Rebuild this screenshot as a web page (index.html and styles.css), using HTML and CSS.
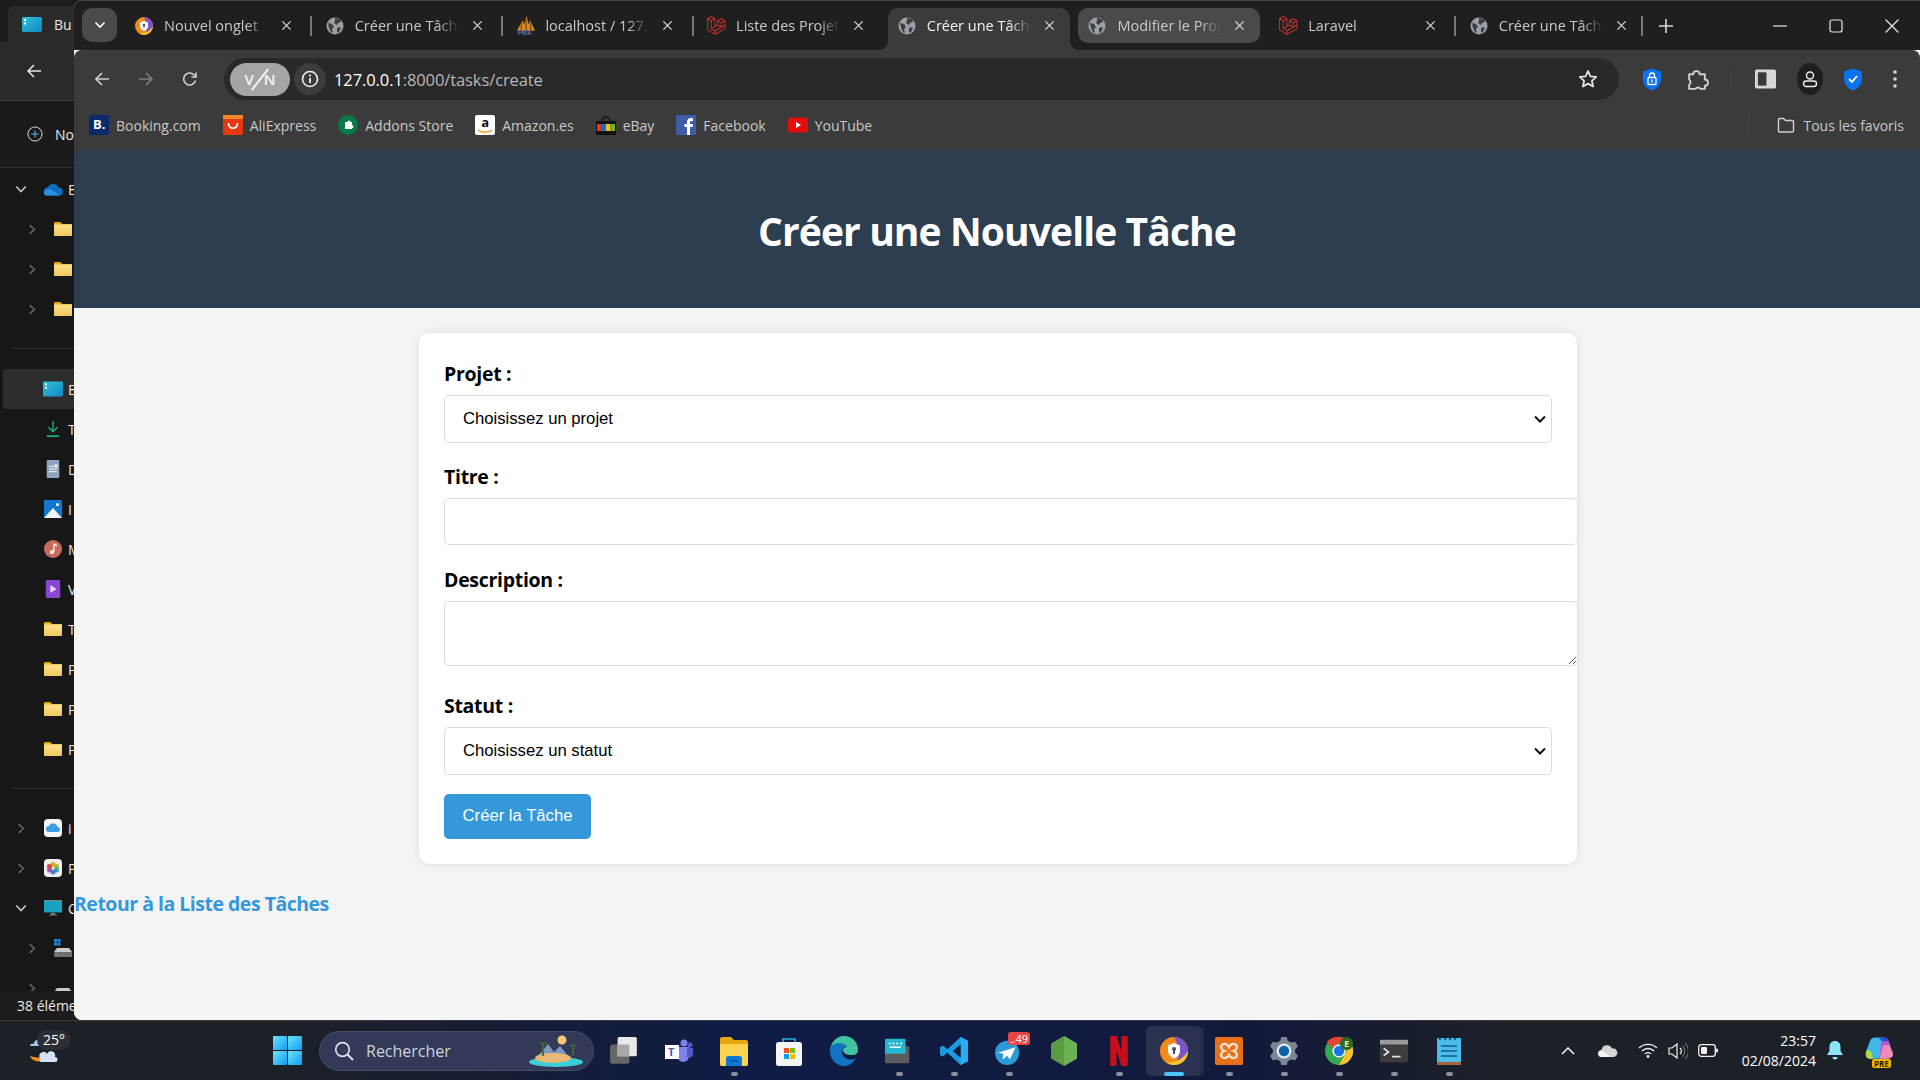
FILE: index.html
```html
<!DOCTYPE html>
<html lang="fr">
<head>
    <meta charset="UTF-8">
    <meta name="viewport" content="width=device-width, initial-scale=1.0">
    <title>Créer une Tâche</title>
    <link rel="stylesheet" href="styles.css">
</head>
<body>
    <svg class="defs" aria-hidden="true">
        <defs>
            <linearGradient id="folderFill" x1="0" y1="0" x2="0" y2="1"><stop offset="0" stop-color="#fbe08e"/><stop offset="1" stop-color="#f0c95e"/></linearGradient>
            <linearGradient id="winFill" x1="0" y1="0" x2="1" y2="1"><stop offset="0" stop-color="#6fe3fb"/><stop offset="1" stop-color="#0f9bf5"/></linearGradient>
            <linearGradient id="thisFill" x1="0" y1="0" x2="1" y2="1"><stop offset="0" stop-color="#2ec5de"/><stop offset="1" stop-color="#1484c0"/></linearGradient>
            <symbol id="globe" viewBox="0 0 18 18">
                <circle cx="9" cy="9" r="8.5" fill="#9aa0a6"/>
                <path d="M2 6l4 1 2 3-2 2 1 4-2-1-2-4zM9 1l5 1 1 3-3 1-1 2-3-2 1-2zM12 10l3 1-2 4-2 1 0-4z" fill="#3c3f43"/>
            </symbol>
            <symbol id="laravel" viewBox="0 0 20 20">
                <path d="M1.500 3.500V14l7 4.500L18 13V5.500l-3.500-2-3.500 2v4L8.500 11V3.500L5 1.500zM1.500 3.500L5 5.500l3.500-2M5 5.500V13l3.500 2L18 9.500M11 5.500l3.500 2 3.500-2M14.500 7.500v3.800M8.500 15v3.500M5 13l3.500-2M11 9.500l3.500 1.800" fill="none" stroke="#c0302a" stroke-width="1" stroke-linejoin="round"/>
            </symbol>
            <symbol id="close" viewBox="0 0 12 12"><path d="M1.500 1.500l9 9M10.500 1.500l-9 9" fill="none" stroke="currentColor" stroke-width="1.400"/></symbol>
            <symbol id="folder" viewBox="0 0 18 14">
                <path d="M0 1.500C0 .7.600 0 1.400 0h4.800l2 2H18v2H0z" fill="#e9a80f"/>
                <rect y="2.500" width="18" height="11.500" rx="1" fill="url(#folderFill)"/>
            </symbol>
            <symbol id="chev-r" viewBox="0 0 10 14"><path d="M2 1.500L8 7l-6 5.500" fill="none" stroke="#6a6a6a" stroke-width="1.800"/></symbol>
            <symbol id="chev-d" viewBox="0 0 14 10"><path d="M1.500 2L7 8l5.500-6" fill="none" stroke="#c8c8c8" stroke-width="1.800"/></symbol>
        </defs>
    </svg>

    <div class="desktop">
        <aside class="explorer">
            <div class="ex-tabs">
                <div class="ex-tab">
                    <svg class="ex-tab-icon" viewBox="0 0 20 15"><rect width="20" height="15" rx="1.500" fill="url(#thisFill)"/><rect x="2" y="2" width="2" height="2" fill="#fff"/><rect x="2" y="5.500" width="2" height="2" fill="#fff"/></svg>
                    <span>Bu</span>
                </div>
            </div>
            <div class="ex-nav">
                <svg width="18" height="18" viewBox="0 0 18 18"><path d="M16 9H3M9 3L3 9l6 6" fill="none" stroke="#e6e6e6" stroke-width="1.500"/></svg>
            </div>
            <div class="ex-cmd">
                <svg width="20" height="20" viewBox="0 0 20 20"><circle cx="10" cy="10" r="8.800" fill="none" stroke="#e6e6e6" stroke-width="1.200"/><path d="M10 5.500v9M5.500 10h9" stroke="#57b8ff" stroke-width="1.300"/></svg>
                <span>No</span>
            </div>
            <nav class="ex-side">
                <div class="ex-row"><svg class="chev-d"><use href="#chev-d"/></svg><svg class="ex-ico" viewBox="0 0 20 13"><path d="M5 13a4 4 0 0 1-.500-8A6 6 0 0 1 15.500 5 4 4 0 0 1 16 13z" fill="#0f6cc4"/><path d="M3 13c-3-1-3-5 1-6 2-1 5 0 7 2l6 4z" fill="#2c8fe0"/></svg><span>E</span></div>
                <div class="ex-row sub"><svg class="chev-r"><use href="#chev-r"/></svg><svg class="ex-ico"><use href="#folder"/></svg></div>
                <div class="ex-row sub"><svg class="chev-r"><use href="#chev-r"/></svg><svg class="ex-ico"><use href="#folder"/></svg></div>
                <div class="ex-row sub"><svg class="chev-r"><use href="#chev-r"/></svg><svg class="ex-ico"><use href="#folder"/></svg></div>
                <hr class="ex-sep first">
                <div class="ex-row on"><i class="no-chev"></i><svg class="ex-ico wide" viewBox="0 0 20 15"><rect width="20" height="15" rx="1" fill="url(#thisFill)"/><rect x="2" y="2" width="2" height="2" fill="#fff"/><rect x="2" y="5.500" width="2" height="2" fill="#fff"/></svg><span>E</span></div>
                <div class="ex-row"><i class="no-chev"></i><svg class="ex-ico" viewBox="0 0 20 20"><path d="M10 1v12M5 8l5 5 5-5" fill="none" stroke="#1fae8a" stroke-width="1.500"/><path d="M3 18h14" stroke="#1fae8a" stroke-width="2"/></svg><span>T</span></div>
                <div class="ex-row"><i class="no-chev"></i><svg class="ex-ico" viewBox="0 0 20 20"><rect x="3" y="0" width="14" height="20" rx="1" fill="#8ea4bc"/><path d="M5.500 7h6M5.500 10h9M5.500 13h9" stroke="#fff" stroke-width="1"/><rect x="12" y="5" width="3" height="3" fill="#fff"/></svg><span>D</span></div>
                <div class="ex-row"><i class="no-chev"></i><svg class="ex-ico" viewBox="0 0 18 18"><rect width="18" height="18" rx="1" fill="#1177cf"/><path d="M0 18L9 8l9 10z" fill="#f2f6fa"/><circle cx="13.500" cy="4.500" r="1.500" fill="#fff"/></svg><span>I</span></div>
                <div class="ex-row"><i class="no-chev"></i><svg class="ex-ico wide" viewBox="0 0 20 20"><circle cx="10" cy="10" r="10" fill="#c86a5e"/><path d="M11 4v9" stroke="#f2e8e6" stroke-width="1.600"/><circle cx="8.800" cy="13.500" r="2.300" fill="#f2e8e6"/><path d="M11 4l3.500 1.200v2L11 6z" fill="#f2e8e6"/></svg><span>M</span></div>
                <div class="ex-row"><i class="no-chev"></i><svg class="ex-ico" viewBox="0 0 16 20"><rect width="16" height="20" rx="1.500" fill="#8b45d4"/><path d="M5 5.500v9l7-4.500z" fill="#e8d8fa"/></svg><span>V</span></div>
                <div class="ex-row"><i class="no-chev"></i><svg class="ex-ico"><use href="#folder"/></svg><span>T</span></div>
                <div class="ex-row"><i class="no-chev"></i><svg class="ex-ico"><use href="#folder"/></svg><span>P</span></div>
                <div class="ex-row"><i class="no-chev"></i><svg class="ex-ico"><use href="#folder"/></svg><span>P</span></div>
                <div class="ex-row"><i class="no-chev"></i><svg class="ex-ico"><use href="#folder"/></svg><span>P</span></div>
                <hr class="ex-sep">
                <div class="ex-row"><svg class="chev-r top"><use href="#chev-r"/></svg><svg class="ex-ico" viewBox="0 0 18 18"><rect width="18" height="18" rx="4" fill="#f4f6f8"/><path d="M5 13a3 3 0 0 1 0-6 4.500 4.500 0 0 1 8.500 1A2.500 2.500 0 0 1 13.500 13z" fill="#3d9be9"/></svg><span>i</span></div>
                <div class="ex-row"><svg class="chev-r top"><use href="#chev-r"/></svg><svg class="ex-ico" viewBox="0 0 18 18"><rect width="18" height="18" rx="4" fill="#eeeeee"/><circle cx="9" cy="5.500" r="2.500" fill="#e8a52b"/><circle cx="12.500" cy="7.500" r="2.500" fill="#9cc13b"/><circle cx="12.500" cy="11" r="2.500" fill="#3aa8a0"/><circle cx="9" cy="13" r="2.500" fill="#4a7fd0"/><circle cx="5.500" cy="11" r="2.500" fill="#9a5cb8"/><circle cx="5.500" cy="7.500" r="2.500" fill="#d8443a"/></svg><span>P</span></div>
                <div class="ex-row"><svg class="chev-d"><use href="#chev-d"/></svg><svg class="ex-ico" viewBox="0 0 18 16"><rect width="18" height="12.500" fill="#17a2c4"/><rect x="0" y="0" width="18" height="1" fill="#7a8a92"/><rect x="7" y="13" width="4" height="1.500" fill="#8a8a8a"/><rect x="5" y="14.500" width="8" height="1" fill="#8a8a8a"/></svg><span>C</span></div>
                <div class="ex-row sub"><svg class="chev-r"><use href="#chev-r"/></svg><svg class="ex-ico" viewBox="0 0 18 18"><rect x="0" y="0" width="3" height="3" fill="#1f86d8"/><rect x="3.500" y="0" width="3" height="3" fill="#1f86d8"/><rect x="0" y="3.500" width="3" height="3" fill="#1f86d8"/><rect x="3.500" y="3.500" width="3" height="3" fill="#1f86d8"/><path d="M3 9h12l3 4H0z" fill="#c9c9c9"/><rect y="13" width="18" height="5" rx="1" fill="#6e6e6e"/><circle cx="3" cy="15.500" r=".7" fill="#59d46a"/></svg></div>
                <div class="ex-row sub"><svg class="chev-r"><use href="#chev-r"/></svg><svg class="ex-ico" viewBox="0 0 18 18"><path d="M3 9h12l3 4H0z" fill="#c9c9c9"/><rect y="13" width="18" height="5" rx="1" fill="#6e6e6e"/></svg></div>
            </nav>
            <div class="ex-status">38 éléme</div>
        </aside>

        <div class="browser">
            <div class="tabstrip">
                <div class="tab-list"><svg width="12" height="8" viewBox="0 0 12 8"><path d="M1.500 1.500L6 6l4.500-4.500" fill="none" stroke="#fff" stroke-width="1.600"/></svg></div>
                <div class="tab">
                    <svg class="fav" viewBox="0 0 18 18"><circle cx="9" cy="9" r="9" fill="#f58a1f"/><path d="M9 0a9 9 0 0 1 9 9c-1 4-4 7-8 8 3-4 2-10-1-17z" fill="#7e57c9"/><path d="M18 9a9 9 0 0 1-9 9c-2 0-4-1-5-2 6 1 11-2 14-7z" fill="#f4c430"/><path d="M9 4l4 1.500V9c0 2.500-2 4-4 5-2-1-4-2.500-4-5V5.500z" fill="#fff"/><circle cx="9" cy="8" r="1.300" fill="#555"/><rect x="8.500" y="8" width="1" height="3" fill="#555"/></svg>
                    <span class="tab-title">Nouvel onglet</span>
                    <svg class="tab-x"><use href="#close"/></svg>
                </div>
                <i class="tab-sep"></i>
                <div class="tab">
                    <svg class="fav"><use href="#globe"/></svg>
                    <span class="tab-title">Créer une Tâche</span>
                    <svg class="tab-x"><use href="#close"/></svg>
                </div>
                <i class="tab-sep"></i>
                <div class="tab">
                    <svg class="fav big" viewBox="0 0 20 20"><path d="M2 15L7 5l1.500 4L11 1l2 8 1.500-4L19 15z" fill="#e08a1e"/><path d="M6 7v8M10.500 4v11M15 7v8" stroke="#2a2a2a" stroke-width=".8"/><text x="2.500" y="19.500" class="svg-pma" fill="#5a6ea8">PMA</text></svg>
                    <span class="tab-title">localhost / 127.0.0.1</span>
                    <svg class="tab-x"><use href="#close"/></svg>
                </div>
                <i class="tab-sep"></i>
                <div class="tab">
                    <svg class="fav big"><use href="#laravel"/></svg>
                    <span class="tab-title">Liste des Projets</span>
                    <svg class="tab-x"><use href="#close"/></svg>
                </div>
                <i class="tab-sep off"></i>
                <div class="tab active">
                    <svg class="fav"><use href="#globe"/></svg>
                    <span class="tab-title">Créer une Tâche</span>
                    <svg class="tab-x"><use href="#close"/></svg>
                </div>
                <i class="tab-sep off"></i>
                <div class="tab hovered">
                    <svg class="fav"><use href="#globe"/></svg>
                    <span class="tab-title">Modifier le Projet</span>
                    <svg class="tab-x"><use href="#close"/></svg>
                </div>
                <i class="tab-sep off"></i>
                <div class="tab">
                    <svg class="fav big"><use href="#laravel"/></svg>
                    <span class="tab-title">Laravel</span>
                    <svg class="tab-x"><use href="#close"/></svg>
                </div>
                <i class="tab-sep"></i>
                <div class="tab">
                    <svg class="fav"><use href="#globe"/></svg>
                    <span class="tab-title">Créer une Tâche</span>
                    <svg class="tab-x"><use href="#close"/></svg>
                </div>
                <i class="tab-sep last"></i>
                <svg class="new-tab" viewBox="0 0 14 14"><path d="M7 0v14M0 7h14" stroke="#d8d8d8" stroke-width="1.600"/></svg>
                <div class="win-btns">
                    <svg viewBox="0 0 14 14"><path d="M0 7h14" stroke="#e8e8e8" stroke-width="1.200"/></svg>
                    <svg viewBox="0 0 14 14"><rect x="1" y="1" width="12" height="12" rx="2" fill="none" stroke="#e8e8e8" stroke-width="1.200"/></svg>
                    <svg viewBox="0 0 14 14"><path d="M.500.500l13 13M13.500.500l-13 13" stroke="#e8e8e8" stroke-width="1.200"/></svg>
                </div>
            </div>

            <div class="toolbar">
                <svg class="nav-ico" viewBox="0 0 16 16"><path d="M15 8H2M8 2L2 8l6 6" fill="none" stroke="#cfcfcf" stroke-width="1.700"/></svg>
                <svg class="nav-ico" viewBox="0 0 16 16"><path d="M1 8h13M8 2l6 6-6 6" fill="none" stroke="#7d7d7d" stroke-width="1.700"/></svg>
                <svg class="nav-ico" viewBox="0 0 16 16"><path d="M13.500 9.500A6 6 0 1 1 12 3.800L14 6M14 1.500V6H9.500" fill="none" stroke="#cfcfcf" stroke-width="1.600"/></svg>
                <div class="omnibox">
                    <div class="vpn-pill"><span>V</span><span>N</span><i class="vpn-slash"></i></div>
                    <div class="info-chip"><svg width="18" height="18" viewBox="0 0 18 18"><circle cx="9" cy="9" r="7.500" fill="none" stroke="#f0f0f0" stroke-width="1.600"/><path d="M9 8v5" stroke="#f0f0f0" stroke-width="1.800"/><circle cx="9" cy="5.500" r="1.100" fill="#f0f0f0"/></svg></div>
                    <div class="url"><b>127.0.0.1</b>:8000/tasks/create</div>
                    <svg class="star" viewBox="0 0 20 20"><path d="M10 2l2.400 5.300 5.800.6-4.300 3.900 1.200 5.700L10 14.600l-5.100 2.900 1.200-5.700L1.800 7.900l5.800-.6z" fill="none" stroke="#e3e3e3" stroke-width="1.800" stroke-linejoin="round"/></svg>
                </div>
                <div class="ext-icons">
                    <svg class="ext shield" viewBox="0 0 18 22"><path d="M9 0l9 3v8c0 5-4 9-9 11-5-2-9-6-9-11V3z" fill="#0a72ee"/><rect x="5" y="9" width="8" height="7" rx="1" fill="none" stroke="#fff" stroke-width="1.300"/><path d="M6.500 9V7a2.500 2.500 0 0 1 5 0v2M9 11v3" fill="none" stroke="#fff" stroke-width="1.300"/></svg>
                    <svg class="ext puzzle" viewBox="0 0 22 22"><path d="M3 6h4a3 3 0 0 1 6 0h5v5a3 3 0 0 1 0 6v3h-4a3 3 0 0 0-5 0H3v-4a3 3 0 0 0 0-5z" fill="none" stroke="#d0d0d0" stroke-width="1.800" stroke-linejoin="round"/></svg>
                    <i class="ext-sep"></i>
                    <svg class="ext panel" viewBox="0 0 22 20"><rect width="22" height="20" rx="2" fill="#d8d8d8"/><rect x="3" y="3" width="9" height="14" fill="#3b3b3b"/></svg>
                    <div class="avatar"><svg width="16" height="18" viewBox="0 0 16 18"><circle cx="8" cy="5.500" r="3.500" fill="none" stroke="#efefef" stroke-width="1.400"/><rect x="1.500" y="11" width="13" height="5.500" rx="2.700" fill="none" stroke="#efefef" stroke-width="1.400"/></svg></div>
                    <svg class="ext shield" viewBox="0 0 18 22"><path d="M9 0l9 3v8c0 5-4 9-9 11-5-2-9-6-9-11V3z" fill="#0a72ee"/><path d="M5 10.500l3 3 5-6" fill="none" stroke="#fff" stroke-width="1.800"/></svg>
                    <svg class="ext dots" viewBox="0 0 4 18"><circle cx="2" cy="2" r="1.800" fill="#d8d8d8"/><circle cx="2" cy="9" r="1.800" fill="#d8d8d8"/><circle cx="2" cy="16" r="1.800" fill="#d8d8d8"/></svg>
                </div>
            </div>

            <div class="bookmarks">
                <a class="bm"><svg class="bm-ico" viewBox="0 0 20 20"><rect width="20" height="20" rx="2" fill="#0a2a6c"/></svg><b class="bm-b">B.</b><span>Booking.com</span></a>
                <a class="bm"><svg class="bm-ico" viewBox="0 0 20 20"><rect width="20" height="20" rx="2" fill="#e8380f"/><rect width="20" height="4" fill="#f2872a"/><path d="M5.500 8c0 7 9 7 9 0" fill="none" stroke="#fff" stroke-width="1.700"/></svg><span>AliExpress</span></a>
                <a class="bm"><svg class="bm-ico" viewBox="0 0 20 20"><circle cx="10" cy="10" r="10" fill="#0c7a48"/><path d="M7 7h2.500a1.500 1.500 0 0 1 3 0H14v3a1.500 1.500 0 0 1 0 3v1H7v-2.500a1.500 1.500 0 0 0 0-2z" fill="#fff"/></svg><span>Addons Store</span></a>
                <a class="bm"><svg class="bm-ico" viewBox="0 0 20 20"><rect width="20" height="20" rx="2" fill="#fff"/><path d="M3 15c4 3 10 3 14 0" fill="none" stroke="#f29a17" stroke-width="1.400"/></svg><b class="bm-a">a</b><span>Amazon.es</span></a>
                <a class="bm"><svg class="bm-ico" viewBox="0 0 20 20"><path d="M6 6a4 4 0 0 1 8 0" fill="none" stroke="#111" stroke-width="1.500"/><rect y="6" width="20" height="14" fill="#111"/><rect x="1" y="9" width="4.500" height="7" fill="#e5352a"/><rect x="5.500" y="9" width="4.500" height="7" fill="#1c6fd0"/><rect x="10" y="9" width="4.500" height="7" fill="#f2c119"/><rect x="14.500" y="9" width="4.500" height="7" fill="#6fb52c"/></svg><span>eBay</span></a>
                <a class="bm"><svg class="bm-ico" viewBox="0 0 20 20"><rect width="20" height="20" rx="1" fill="#3f5da6"/><path d="M14 20v-8h2.500l.5-3h-3V7.500C14 6.500 14.500 6 15.500 6H17V3.200c-3.500-.7-6 .3-6 3.800v2H8.500v3H11v8z" fill="#fff"/></svg><span>Facebook</span></a>
                <a class="bm"><svg class="bm-ico" viewBox="0 0 20 20"><rect y="2.500" width="20" height="15" rx="3.500" fill="#e60d0d"/><path d="M8 7v6l5-3z" fill="#fff"/></svg><span>YouTube</span></a>
                <div class="bm-all">
                    <i class="bm-sep"></i>
                    <svg width="18" height="18" viewBox="0 0 18 18"><path d="M1.500 15V3.500c0-.6.400-1 1-1h4l2 2h7c.6 0 1 .4 1 1V15c0 .6-.4 1-1 1h-13c-.6 0-1-.4-1-1z" fill="none" stroke="#d0d0d0" stroke-width="1.400"/></svg>
                    <span>Tous les favoris</span>
                </div>
            </div>

            <div class="page">
                <header class="page-head">
                    <h1>Créer une Nouvelle Tâche</h1>
                </header>
                <form class="card">
                    <label class="lbl" for="projet">Projet :</label>
                    <select class="sel gap-a" id="projet"><option>Choisissez un projet</option></select>
                    <label class="lbl" for="titre">Titre :</label>
                    <input class="txt gap-a" id="titre" type="text">
                    <label class="lbl" for="desc">Description :</label>
                    <textarea class="area" id="desc"></textarea>
                    <label class="lbl" for="statut">Statut :</label>
                    <select class="sel gap-b" id="statut"><option>Choisissez un statut</option></select>
                    <button class="submit" type="button">Créer la Tâche</button>
                </form>
                <a class="back" href="#">Retour à la Liste des Tâches</a>
            </div>
        </div>
    </div>

    <footer class="taskbar">
        <div class="weather">
            <svg width="34" height="32" viewBox="0 0 34 32"><path d="M8 10a4 4 0 0 1 7-3 3.500 3.500 0 0 1 3 5H4a2.500 2.500 0 0 1 4-2z" fill="#a9c3ea"/><path d="M4 19c2 6 12 8 18 1l-4-2c-3 3-8 3-14 1z" fill="#f08a1c" transform="translate(0 3)"/><path d="M14 24a4 4 0 0 1 7-4 4 4 0 0 1 8 3 2.500 2.500 0 0 1 0 5H15a2.500 2.500 0 0 1-1-4z" fill="#d4e2f7"/></svg>
            <span class="temp">25°</span>
        </div>
        <svg class="start" viewBox="0 0 29 29"><rect width="14" height="14" rx="1" fill="url(#winFill)"/><rect x="15" width="14" height="14" rx="1" fill="url(#winFill)"/><rect y="15" width="14" height="14" rx="1" fill="url(#winFill)"/><rect x="15" y="15" width="14" height="14" rx="1" fill="url(#winFill)"/></svg>
        <div class="search">
            <svg width="20" height="20" viewBox="0 0 20 20"><circle cx="8.500" cy="8.500" r="6.800" fill="none" stroke="#dfe3ea" stroke-width="1.700"/><path d="M13.500 13.500l5.500 5.500" stroke="#dfe3ea" stroke-width="1.900"/></svg>
            <span>Rechercher</span>
            <svg class="island" width="56" height="34" viewBox="0 0 56 34"><circle cx="34" cy="6" r="4.500" fill="#f4c676"/><path d="M10 22l10-12 6 8 6-6 10 12z" fill="#7f97c2"/><ellipse cx="28" cy="28" rx="27" ry="5" fill="#3ad0da"/><ellipse cx="25" cy="24" rx="18" ry="5" fill="#e9b877"/><path d="M15 22V10M12 9l3 1 4-1M45 22V12M42 11l3 1 3-1" stroke="#3f6b35" stroke-width="1.800" fill="none"/></svg>
        </div>
        <div class="apps">
            <div class="app"><svg viewBox="0 0 26 28"><rect x="0" y="8" width="18" height="18" rx="2" fill="#666"/><rect x="7" y="1" width="18" height="18" rx="1.500" fill="#e8e8e8"/><rect x="7" y="8" width="11" height="11" fill="#a8a8a8"/></svg></div>
            <div class="app"><svg viewBox="0 0 28 26"><circle cx="19" cy="5" r="3.500" fill="#7b83eb"/><circle cx="25" cy="7" r="2.500" fill="#5059c9"/><path d="M13 9h11v10a6 6 0 0 1-11 2z" fill="#7b83eb"/><path d="M22 10h6v7a4 4 0 0 1-6 2z" fill="#5059c9"/><rect x="0" y="7" width="14" height="14" fill="#fff"/><text x="3" y="18" class="svg-t" fill="#4b53bc">T</text></svg></div>
            <div class="app dot"><svg viewBox="0 0 28 30"><path d="M0 3c0-1 1-2 2-2h9l3 3h12c1 0 2 1 2 2v22c0 1-1 2-2 2H2c-1 0-2-1-2-2z" fill="#e8a70f"/><path d="M0 8h28v20c0 1-1 2-2 2H2c-1 0-2-1-2-2z" fill="#fcd34e"/><path d="M6 22c0-1 1-2 2-2h12c1 0 2 1 2 2v8H6z" fill="#0f78d4"/><rect x="10" y="24" width="8" height="1.500" fill="#0a4d8c"/></svg></div>
            <div class="app"><svg viewBox="0 0 26 30"><path d="M7 7V3h12v4" fill="none" stroke="#27aee0" stroke-width="1.600"/><rect x="0" y="6" width="26" height="24" rx="2.500" fill="#f5f5f5"/><rect x="8" y="12" width="5" height="5" fill="#f25022"/><rect x="14" y="12" width="5" height="5" fill="#7fba00"/><rect x="8" y="18" width="5" height="5" fill="#00a4ef"/><rect x="14" y="18" width="5" height="5" fill="#ffb900"/></svg></div>
            <div class="app"><svg viewBox="0 0 28 30"><path d="M14 0c8 0 14 6 14 14 0 3-2 5-6 5-5 0-9-1-9-5 0-2 2-3 4-3-2-3-7-3-10-1C2 12 0 14 0 16 0 7 6 0 14 0z" fill="#3fc3a0"/><path d="M0 15c0-5 4-8 9-8 3 0 6 1 8 4-3 0-5 2-5 5 0 6 8 10 14 6-3 5-7 8-12 8C6 30 0 23 0 15z" fill="#1273c4"/></svg></div>
            <div class="app dot"><svg viewBox="0 0 30 26"><rect x="0" y="8" width="26" height="18" rx="1.500" fill="#5c5c5c"/><rect x="0" y="0" width="22" height="16" rx="1.500" fill="#26b6cf"/><path d="M4 5h2M8 5h2M12 5h2M16 5h2M5 9h12" stroke="#fff" stroke-width="1.600"/></svg></div>
            <div class="app dot"><svg viewBox="0 0 30 30"><path d="M22 0l8 4v22l-8 4L8 17l-5 4-3-2V11l3-2 5 4zM22 8l-8 7 8 7z" fill="#1a9be0"/><path d="M22 0l8 4v22l-8 4z" fill="#26aef0"/><path d="M22 8l-8 7 8 7z" fill="#0f1a3c"/></svg></div>
            <div class="app dot"><svg viewBox="0 0 30 30"><circle cx="13" cy="17" r="13" fill="#2a9bd6"/><path d="M3 17l19-6-6 13-3-4-5 4 1-6z" fill="#fff"/></svg><b class="badge">..49</b></div>
            <div class="app"><svg viewBox="0 0 26 30"><path d="M13 0l13 7.500v15L13 30 0 22.500v-15z" fill="#5a9c46"/><path d="M13 0l13 7.500v15L13 30z" fill="#6bb253"/></svg></div>
            <div class="app dot"><svg viewBox="0 0 14 24"><path d="M0 0h5l4 12V0h5v24H9L5 12v12H0z" fill="#c8101a"/></svg></div>
            <div class="app running"><svg viewBox="0 0 28 28"><circle cx="14" cy="14" r="14" fill="#f28a1c"/><path d="M14 0a14 14 0 0 1 14 14c-2 6-6 10-12 12 5-7 3-17-2-26z" fill="#7a55c7"/><path d="M28 14a14 14 0 0 1-14 14c-3 0-6-1-8-3 9 2 17-3 22-11z" fill="#f6c52f"/><path d="M14 6l6 2.500V14c0 3.500-3 6-6 7.500-3-1.500-6-4-6-7.500V8.500z" fill="#fff"/><circle cx="14" cy="12" r="2" fill="#4a4a4a"/><rect x="13" y="12" width="2" height="5" fill="#4a4a4a"/></svg></div>
            <div class="app dot"><svg viewBox="0 0 30 30"><rect width="30" height="30" rx="2" fill="#e9701a"/><path d="M8 8c4-2 6 1 7 3 1-2 3-5 7-3 3 2 1 6-2 7 3 1 5 5 2 7-4 2-6-1-7-3-1 2-3 5-7 3-3-2-1-6 2-7-3-1-5-5-2-7z" fill="none" stroke="#fbe3cf" stroke-width="2.400"/></svg></div>
            <div class="app dot"><svg viewBox="0 0 30 30"><path d="M12 0h6l1 4 4 2 4-1 3 5-3 3v4l3 3-3 5-4-1-4 2-1 4h-6l-1-4-4-2-4 1-3-5 3-3v-4L0 10l3-5 4 1 4-2z" fill="#7b8794"/><circle cx="15" cy="15" r="8" fill="#dfe6ee"/><circle cx="15" cy="15" r="5.500" fill="#0d5fa8"/></svg></div>
            <div class="app dot"><svg viewBox="0 0 30 30"><circle cx="15" cy="15" r="15" fill="#34a853"/><path d="M15 0a15 15 0 0 1 13 7.500H15A7.500 7.500 0 0 0 8 12L2 5a15 15 0 0 1 13-5z" fill="#ea4335"/><path d="M28 7.500A15 15 0 0 1 15 30l6-11a7.500 7.500 0 0 0 0-11.500z" fill="#fbc02d"/><circle cx="15" cy="15" r="7" fill="#fff"/><circle cx="15" cy="15" r="5.500" fill="#1a73e8"/><circle cx="23" cy="7" r="7" fill="#2e6b1f"/><text x="20.500" y="10.500" class="svg-e" fill="#dff0d8">E</text></svg></div>
            <div class="app dot"><svg viewBox="0 0 30 24"><rect width="30" height="24" rx="1.500" fill="#3d3d3d"/><rect width="30" height="5" fill="#9b9b9b"/><path d="M4 9l5 4-5 4" fill="none" stroke="#e8e8e8" stroke-width="1.800"/><path d="M13 18h9" stroke="#e8e8e8" stroke-width="1.800"/></svg></div>
            <div class="app dot"><svg viewBox="0 0 24 30"><rect y="2" width="24" height="26" fill="#4bbde8"/><rect y="26" width="24" height="3" fill="#a8623a"/><path d="M4 10h16M4 15h16M4 20h16" stroke="#125e86" stroke-width="1.600"/><path d="M3 3h0M8 3h0M13 3h0M18 3h0" stroke="#125e86" stroke-width="2.400" stroke-linecap="round"/></svg></div>
        </div>
        <div class="tray">
            <svg class="t-chev" viewBox="0 0 14 8"><path d="M1 7l6-6 6 6" fill="none" stroke="#f2f2f2" stroke-width="1.500"/></svg>
            <svg class="t-cloud" viewBox="0 0 20 13"><path d="M4 13a3.500 3.500 0 0 1-.5-7A5.500 5.500 0 0 1 14 4.500 4.300 4.300 0 0 1 16 13z" fill="#d4d4d4"/><path d="M3 13c-2-.5-3-2-3-3.500C0 7 3 6 5.500 7.500L13 13z" fill="#f4f4f4"/></svg>
            <svg class="t-wifi" viewBox="0 0 20 15"><path d="M1 5a13 13 0 0 1 18 0M4 8a8.500 8.500 0 0 1 12 0M7 11a4 4 0 0 1 6 0" fill="none" stroke="#f2f2f2" stroke-width="1.300"/><circle cx="10" cy="13.500" r="1.400" fill="#f2f2f2"/></svg>
            <svg class="t-vol" viewBox="0 0 20 18"><path d="M1 6h3l5-4v14l-5-4H1z" fill="none" stroke="#f2f2f2" stroke-width="1.200"/><path d="M12 6a4 4 0 0 1 0 6" fill="none" stroke="#f2f2f2" stroke-width="1.200"/><path d="M14.500 3.500a8 8 0 0 1 0 11M17 1a11 11 0 0 1 0 16" fill="none" stroke="#6a6a6a" stroke-width="1.200"/></svg>
            <svg class="t-bat" viewBox="0 0 20 13"><rect x=".7" y=".7" width="16.600" height="11.600" rx="2.500" fill="none" stroke="#f2f2f2" stroke-width="1.300"/><rect x="3" y="3" width="6" height="7" rx="1" fill="#f2f2f2"/><rect x="18" y="4.500" width="2" height="4" rx="1" fill="#f2f2f2"/></svg>
            <div class="clock"><span>23:57</span><span>02/08/2024</span></div>
            <svg class="t-bell" viewBox="0 0 16 19"><path d="M8 0c3.500 0 5.500 2.500 5.500 6v4l2.500 4H0l2.500-4V6C2.500 2.500 4.500 0 8 0z" fill="#8ae6ff"/><path d="M5.500 16h5a2.500 2.500 0 0 1-5 0z" fill="#8ae6ff"/></svg>
            <div class="copilot">
                <svg viewBox="0 0 30 26"><path d="M11 1h8l-4 22H5C1 23 0 19 1 16L5 5c1-3 3-4 6-4z" fill="#3fb8e6"/><path d="M2 14c3 0 6 2 6 9H5C1 23 0 18 2 14z" fill="#b7d93a"/><path d="M17 1h2c3 0 5 2 6 5l4 12c0 3-2 5-6 5h-8z" fill="#b45ad2"/><path d="M19 9l6 0 4 9c0 3-2 5-6 5h-8z" fill="#f08bb8"/><path d="M14 1h5c2 0 4 1 5 4h-6z" fill="#1a4fd8"/></svg>
                <b class="pre">PRE</b>
            </div>
        </div>
    </footer>
</body>
</html>
```

FILE: styles.css
```css
* {
    box-sizing: border-box;
}
html, body {
    height: 100%;
}
body {
    margin: 0;
    overflow: hidden;
    background-color: #191919;
    font-family: "Open Sans", "Noto Sans", sans-serif;
    color: #000;
}
.defs {
    width: 0;
    height: 0;
    display: block;
}
.desktop {
    display: flex;
    height: 1020px;
}

/* explorer window behind the browser */
.explorer {
    width: 74px;
    flex-shrink: 0;
    display: flex;
    flex-direction: column;
    overflow: hidden;
    color: #e8e8e8;
    font-size: 14px;
}
.ex-tabs {
    height: 42px;
    padding: 6px 0 0 8px;
    background-color: #1c1c1c;
}
.ex-tab {
    height: 36px;
    display: flex;
    align-items: center;
    gap: 12px;
    padding-left: 14px;
    background-color: #2a2a2a;
    border-radius: 6px 0 0 0;
    white-space: nowrap;
}
.ex-tab-icon {
    width: 20px;
    height: 15px;
    flex-shrink: 0;
}
.ex-nav {
    height: 59px;
    display: flex;
    align-items: center;
    padding-left: 25px;
    background-color: #2a2a2a;
    border-bottom: 1px solid #3a3a3a;
}
.ex-cmd {
    height: 67px;
    display: flex;
    align-items: center;
    gap: 12px;
    padding-left: 27px;
    background-color: #1a1a1a;
    border-bottom: 1px solid #333;
    white-space: nowrap;
}
.ex-side {
    flex: 1;
    padding: 1px 0 0 3px;
    overflow: hidden;
    background-color: #171717;
}
.ex-row {
    height: 40px;
    display: flex;
    align-items: center;
    padding-left: 12px;
    white-space: nowrap;
    border-radius: 3px 0 0 3px;
}
.ex-row span {
    margin-left: 6px;
}
.ex-row.sub {
    padding-left: 25px;
}
.ex-row.on {
    background-color: #2d2d2d;
}
.no-chev, .chev-d, .chev-r {
    width: 12px;
    height: 10px;
    flex-shrink: 0;
}
.chev-r {
    width: 8px;
    height: 13px;
}
.chev-r.top {
    margin: 0 2px;
}
.ex-row.sub .ex-ico {
    margin-left: 18px;
}
.ex-ico {
    width: 18px;
    height: 18px;
    margin-left: 17px;
    flex-shrink: 0;
}
.ex-ico.wide {
    width: 20px;
    margin-left: 16px;
    margin-right: -1px;
}
.ex-row:first-child .ex-ico {
    width: 20px;
    margin-left: 16px;
    margin-right: -1px;
    height: 14px;
}
.ex-sep {
    height: 1px;
    margin: 19px 0 19px 10px;
    border: none;
    background-color: #333;
}
.ex-sep.first {
    margin: 19px 0 20px 10px;
}
.ex-status {
    height: 29px;
    padding-left: 17px;
    line-height: 29px;
    font-size: 14px;
    background-color: #1c1c1c;
    white-space: nowrap;
}

/* browser */
.browser {
    flex: 1;
    min-width: 0;
    display: flex;
    flex-direction: column;
    background-color: #f4f4f4;
    border-radius: 8px 0 0 8px;
    overflow: hidden;
}
.tabstrip {
    height: 50px;
    display: flex;
    align-items: flex-start;
    padding: 7px 0 0 8px;
    background-color: #1f1f1f;
    border-top: 1px solid #454545;
    color: #c9c9c9;
    font-size: 14.500px;
}
.tab-list {
    width: 35px;
    height: 34px;
    display: flex;
    align-items: center;
    justify-content: center;
    margin-right: 8px;
    background-color: #4a4a4a;
    border-radius: 10px;
}
.tab {
    position: relative;
    width: 182px;
    height: 35px;
    flex-shrink: 0;
    display: flex;
    align-items: center;
    padding-left: 10px;
    border-radius: 10px;
}
.tab.active {
    height: 42px;
    padding-bottom: 7px;
    background-color: #3b3b3b;
    border-radius: 10px 10px 0 0;
    color: #f2f2f2;
}
.tab.active::before, .tab.active::after {
    content: "";
    position: absolute;
    bottom: 0;
    width: 10px;
    height: 10px;
}
.tab.active::before {
    left: -10px;
    background: radial-gradient(circle at 0 0, #1f1f1f 10px, #3b3b3b 10.5px);
}
.tab.active::after {
    right: -10px;
    background: radial-gradient(circle at 100% 0, #1f1f1f 10px, #3b3b3b 10.5px);
}
.tab.hovered {
    background-color: #4a4a4a;
}
.fav {
    width: 18px;
    height: 18px;
    flex-shrink: 0;
}
.fav.big {
    width: 21px;
    height: 21px;
    margin: 0 -1.500px;
}
.tab-title {
    width: 106px;
    margin-left: 11px;
    overflow: hidden;
    white-space: nowrap;
    -webkit-mask-image: linear-gradient(to right, #000 78%, transparent 98%);
    mask-image: linear-gradient(to right, #000 78%, transparent 98%);
}
.tab-x {
    width: 11px;
    height: 11px;
    margin-left: 11px;
    flex-shrink: 0;
    color: #d8d8d8;
}
.tab-sep {
    width: 8.7px;
    height: 20px;
    margin-top: 8px;
    flex-shrink: 0;
    background: linear-gradient(#777, #777) center / 2px 100% no-repeat;
}
.tab-sep.off {
    background: none;
}
.tab-sep.last {
    margin-left: -4px;
}
.svg-pma {
    font-family: "Liberation Sans", sans-serif;
    font-size: 6px;
    font-weight: 700;
}
.new-tab {
    width: 14px;
    height: 14px;
    margin: 11px 0 0 12px;
}
.win-btns {
    display: flex;
    gap: 42px;
    margin: 11px 0 0 auto;
    padding-right: 21px;
}
.win-btns svg {
    width: 14px;
    height: 14px;
}

.toolbar {
    height: 50px;
    display: flex;
    align-items: center;
    padding: 8px 0 0 20px;
    background-color: #3b3b3b;
    border-radius: 8px 8px 0 0;
}
.nav-ico {
    width: 16px;
    height: 16px;
    margin-right: 28px;
    flex-shrink: 0;
}
.omnibox {
    width: 1395px;
    height: 42px;
    flex-shrink: 0;
    display: flex;
    align-items: center;
    margin-left: -2px;
    padding: 0 21px 0 6px;
    background-color: #292929;
    border-radius: 21px;
}
.vpn-pill {
    position: relative;
    width: 60px;
    height: 33px;
    display: flex;
    align-items: center;
    justify-content: center;
    gap: 10px;
    background-color: #a5a5a5;
    border-radius: 17px;
    color: #f4f4f4;
    font-size: 15px;
    font-weight: 600;
}
.vpn-slash {
    position: absolute;
    left: 29px;
    top: 3px;
    width: 2px;
    height: 27px;
    background-color: #f4f4f4;
    transform: rotate(38deg);
}
.info-chip {
    width: 32px;
    height: 32px;
    display: flex;
    align-items: center;
    justify-content: center;
    margin-left: 4px;
    background-color: #3c3c3c;
    border-radius: 50%;
}
.url {
    margin-left: 8px;
    font-size: 16.500px;
    letter-spacing: -0.1px;
    color: #b8b8b8;
    white-space: nowrap;
}
.url b {
    font-weight: 400;
    color: #fff;
}
.star {
    width: 20px;
    height: 20px;
    margin-left: auto;
}
.ext-icons {
    flex: 1;
    display: flex;
    align-items: center;
    padding-left: 24px;
}
.ext {
    flex-shrink: 0;
}
.shield {
    width: 18px;
    height: 23px;
}
.puzzle {
    width: 23px;
    height: 23px;
    margin-left: 25px;
}
.ext-sep {
    width: 1px;
    height: 22px;
    margin-left: 21px;
    background-color: #454545;
}
.panel {
    width: 21px;
    height: 20px;
    margin-left: 24px;
}
.avatar {
    width: 26px;
    height: 32px;
    margin: 0 21px 0 21px;
    display: flex;
    align-items: center;
    justify-content: center;
    background-color: #1f1f1f;
    border-radius: 50%;
}
.dots {
    width: 4px;
    height: 18px;
    margin-left: 31px;
}

.bookmarks {
    height: 50px;
    display: flex;
    align-items: center;
    gap: 22px;
    padding-left: 15px;
    background-color: #3b3b3b;
    color: #c9c9c9;
    font-size: 14px;
}
.bm {
    position: relative;
    display: flex;
    align-items: center;
    gap: 7px;
    white-space: nowrap;
}
.bm-ico {
    width: 20px;
    height: 20px;
    flex-shrink: 0;
}
.bm-b, .bm-a {
    position: absolute;
    left: 4px;
    top: 50%;
    transform: translateY(-55%);
    font-size: 13px;
    color: #fff;
    line-height: 1;
}
.bm-a {
    left: 6px;
    color: #111;
    transform: translateY(-70%);
}
.bm-all {
    display: flex;
    align-items: center;
    gap: 8px;
    margin-left: auto;
    padding-right: 16px;
    white-space: nowrap;
}
.bm-sep {
    width: 1px;
    height: 22px;
    margin-right: 20px;
    background-color: #454545;
}

/* the page itself */
.page {
    flex: 1;
    background-color: #f4f4f4;
}
.page-head {
    height: 158px;
    display: flex;
    align-items: center;
    justify-content: center;
    padding-top: 2px;
    background-color: #2c3e50;
    color: #fff;
}
.page-head h1 {
    margin: 0;
    font-size: 39px;
    font-weight: 700;
    letter-spacing: -0.9px;
}
.card {
    width: 1158px;
    margin: 25px 0 0 345px;
    padding: 25px;
    background-color: #fff;
    border-radius: 10px;
    box-shadow: 0 0 10px rgba(0, 0, 0, 0.1);
}
.lbl {
    display: block;
    height: 27px;
    margin-bottom: 10px;
    font-size: 19.500px;
    font-weight: 700;
    line-height: 31px;
    letter-spacing: -0.3px;
}
.sel {
    display: block;
    width: 100%;
    height: 48px;
    padding: 0 0 2px 18px;
    font-family: "Liberation Sans", Arial, sans-serif;
    font-size: 16.670px;
    color: #000;
    -webkit-appearance: none;
    appearance: none;
    background: #fff url("data:image/svg+xml,%3Csvg xmlns='http://www.w3.org/2000/svg' width='12' height='8' viewBox='0 0 12 8'%3E%3Cpath d='M1 1.500l5 5 5-5' fill='none' stroke='%23111' stroke-width='2'/%3E%3C/svg%3E") no-repeat right 5px center;
    border: 1px solid #ddd;
    border-radius: 5px;
}
.txt, .area {
    display: block;
    box-sizing: content-box;
    width: 1108px;
    padding: 12px;
    font-family: "Liberation Sans", Arial, sans-serif;
    font-size: 16.670px;
    background-color: #fff;
    border: 1px solid #ddd;
    border-radius: 5px;
}
.txt {
    height: 21px;
}
.area {
    height: 39px;
    margin-bottom: 24px;
}
.gap-a {
    margin-bottom: 18px;
}
.txt.gap-a {
    margin-bottom: 19px;
}
.gap-b {
    margin-bottom: 19px;
}
.submit {
    display: block;
    width: 147px;
    height: 45px;
    padding: 0 0 2px;
    font-family: "Liberation Sans", Arial, sans-serif;
    font-size: 16.670px;
    color: #fff;
    background-color: #3498db;
    border: none;
    border-radius: 5px;
}
.back {
    display: block;
    margin: 26px 0 0 0;
    font-size: 19.500px;
    font-weight: 700;
    letter-spacing: -0.5px;
    color: #3498db;
    text-decoration: none;
}

/* taskbar */
.taskbar {
    height: 60px;
    display: flex;
    align-items: center;
    background: linear-gradient(to right, #1c2027 0, #1c2027 15%, #101c45 38%, #121a3c 65%, #1c2027 78%, #1c2027 100%);
    border-top: 1px solid #3a3d44;
    color: #fff;
}
.weather {
    position: relative;
    width: 273px;
    height: 58px;
    padding: 12px 0 0 26px;
    flex-shrink: 0;
}
.temp {
    position: absolute;
    left: 37px;
    top: 8px;
    padding: 0 6px;
    font-size: 14px;
    line-height: 20px;
    background-color: #2b2e33;
    border-radius: 10px;
}
.start {
    width: 29px;
    height: 29px;
    flex-shrink: 0;
}
.search {
    width: 275px;
    height: 40px;
    flex-shrink: 0;
    display: flex;
    align-items: center;
    margin-left: 17px;
    padding-left: 14px;
    background-color: #323a58;
    border: 1px solid #444b66;
    border-radius: 20px;
    font-size: 16px;
    color: #cfd3dc;
}
.search span {
    margin-left: 12px;
}
.island {
    margin-left: auto;
    margin-right: 9px;
}
.apps {
    display: flex;
    margin-left: 2px;
    flex-shrink: 0;
}
.app {
    position: relative;
    width: 55px;
    height: 50px;
    display: flex;
    align-items: center;
    justify-content: center;
}
.app svg {
    width: 28px;
    height: 30px;
}
.app.dot::after, .app.running::after {
    content: "";
    position: absolute;
    left: 50%;
    bottom: 0;
    width: 7px;
    height: 4px;
    margin-left: -3px;
    background-color: #8b909b;
    border-radius: 2px;
}
.app.running {
    background-color: #2b3150;
    border-radius: 5px;
    box-shadow: 4px 0 0 -1px #232946;
}
.app.running::after {
    width: 20px;
    margin-left: -10px;
    background-color: #4cc2ff;
}
.badge {
    position: absolute;
    right: 6px;
    top: 6px;
    padding: 0 2px;
    font-size: 11px;
    font-weight: 400;
    line-height: 13px;
    background-color: #e84545;
    border-radius: 3px;
}
.svg-t {
    font-family: "Open Sans", sans-serif;
    font-size: 11px;
    font-weight: 700;
}
.svg-e {
    font-family: "Open Sans", sans-serif;
    font-size: 9px;
    font-weight: 700;
}
.tray {
    flex: 1;
    display: flex;
    align-items: center;
    padding-left: 85px;
    font-size: 14px;
}
.t-chev {
    width: 14px;
    height: 8px;
}
.t-cloud {
    width: 20px;
    height: 13px;
    margin-left: 23px;
}
.t-wifi {
    width: 20px;
    height: 15px;
    margin-left: 20px;
}
.t-vol {
    width: 20px;
    height: 18px;
    margin-left: 10px;
}
.t-bat {
    width: 20px;
    height: 13px;
    margin-left: 10px;
}
.clock {
    width: 98px;
    display: flex;
    flex-direction: column;
    align-items: flex-end;
    line-height: 20px;
}
.t-bell {
    width: 16px;
    height: 19px;
    margin-left: 11px;
}
.copilot {
    position: relative;
    width: 29px;
    height: 30px;
    margin-left: 22px;
}
.copilot svg {
    width: 29px;
    height: 26px;
    display: block;
}
.pre {
    position: absolute;
    left: 7px;
    bottom: -2px;
    padding: 0 2px;
    font-size: 8px;
    line-height: 9px;
    color: #2a2000;
    background-color: #f4b400;
    border-radius: 2px;
}
```
